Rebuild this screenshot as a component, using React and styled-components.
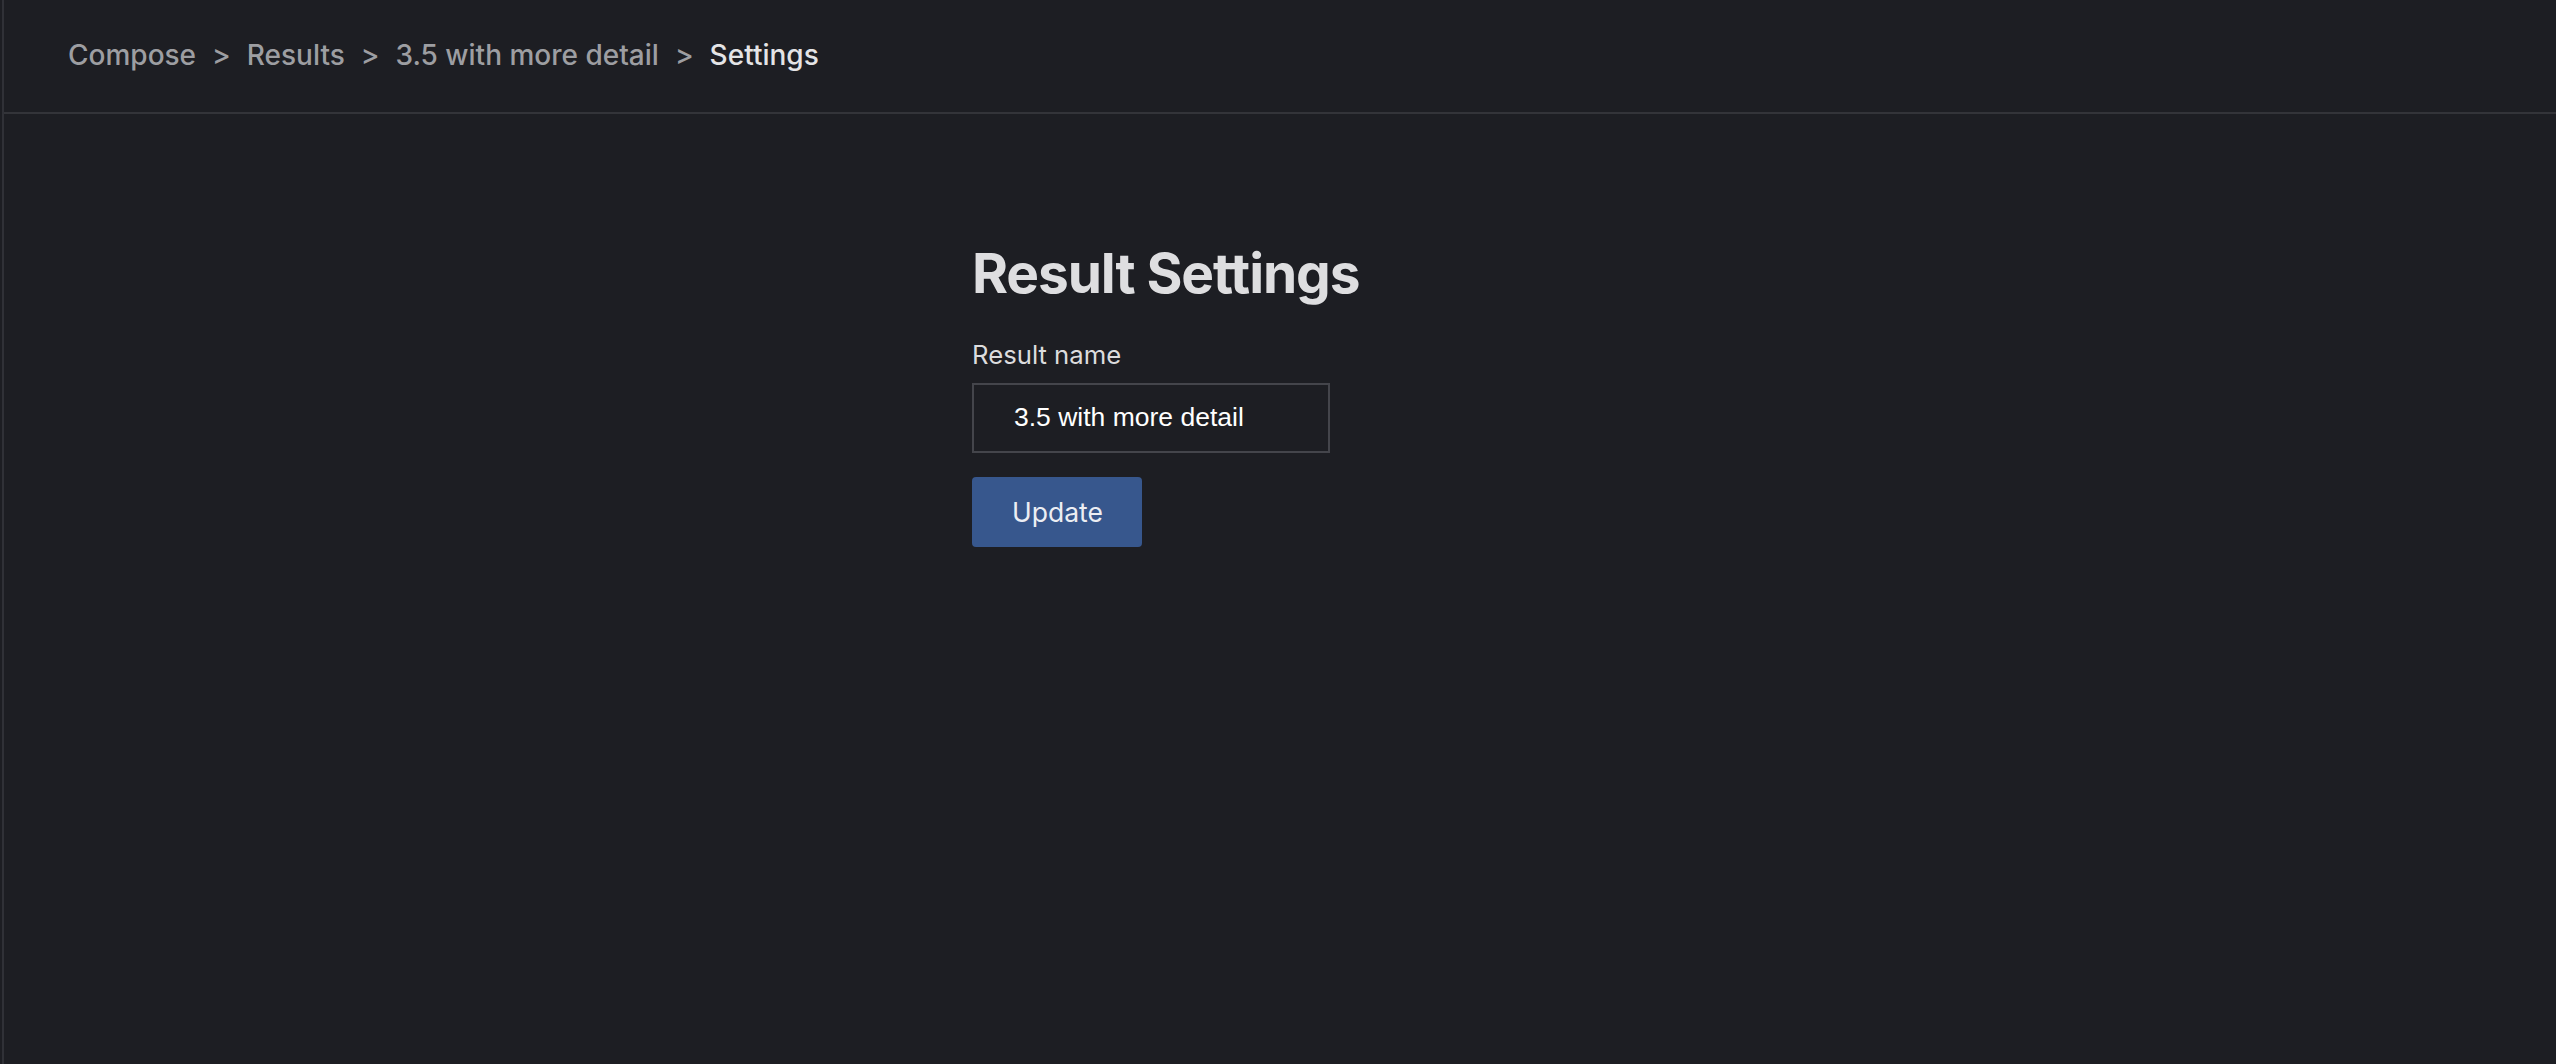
import React from "react";
import styled, { createGlobalStyle } from "styled-components";

const GlobalStyle = createGlobalStyle`
  html, body {
    margin: 0;
    padding: 0;
    background: #1d1e23;
    font-family: Inter, "Noto Sans", sans-serif;
  }
  * {
    box-sizing: border-box;
  }
`;

const Page = styled.div`
  min-height: 1064px;
  margin-left: 2px;
  border-left: 2px solid #303137;
  background: #1d1e23;
`;

const Header = styled.header`
  height: 114px;
  display: flex;
  align-items: center;
  padding: 0 0 2px 64px;
  border-bottom: 2px solid #333439;
`;

const Crumbs = styled.nav`
  display: flex;
  align-items: center;
  gap: 16px;
  font-size: 28px;
  font-weight: 500;
`;

const Crumb = styled.span`
  color: ${(p) => (p.$active ? "#e4e4e6" : "#9d9ea2")};
`;

const Sep = styled.span`
  color: #9d9ea2;
`;

const Main = styled.main`
  max-width: 616px;
  margin: 0 auto;
  padding-top: 126px;
  display: flex;
  flex-direction: column;
  align-items: flex-start;
`;

const Title = styled.h1`
  margin: 0 0 32px;
  font-size: 55px;
  line-height: 1.21;
  font-weight: 700;
  letter-spacing: -0.02em;
  color: #dedee0;
`;

const Label = styled.label`
  font-size: 25.7px;
  line-height: 1.21;
  color: #dcdcde;
  margin-bottom: 13px;
`;

const TextInput = styled.input`
  width: 358px;
  height: 70px;
  padding: 0 40px;
  background: transparent;
  border: 2px solid #44454b;
  border-radius: 0;
  color: #ffffff;
  font-family: "Liberation Sans", Arial, sans-serif;
  font-size: 26.5px;
  outline: none;
  margin-bottom: 24px;
`;

const Button = styled.button`
  height: 70px;
  width: 170px;
  padding: 0 40px;
  text-align: left;
  border: none;
  border-radius: 4px;
  background: #37578d;
  color: #eceef3;
  font-family: Inter, sans-serif;
  font-size: 26.5px;
  font-weight: 400;
  cursor: pointer;
`;

const crumbs = ["Compose", "Results", "3.5 with more detail"];

export default function App() {
  return (
    <>
      <GlobalStyle />
      <Page>
        <Header>
          <Crumbs>
            {crumbs.map((c) => (
              <React.Fragment key={c}>
                <Crumb>{c}</Crumb>
                <Sep>&gt;</Sep>
              </React.Fragment>
            ))}
            <Crumb $active>Settings</Crumb>
          </Crumbs>
        </Header>
        <Main>
          <Title>Result Settings</Title>
          <Label htmlFor="result-name">Result name</Label>
          <TextInput id="result-name" defaultValue="3.5 with more detail" />
          <Button>Update</Button>
        </Main>
      </Page>
    </>
  );
}
